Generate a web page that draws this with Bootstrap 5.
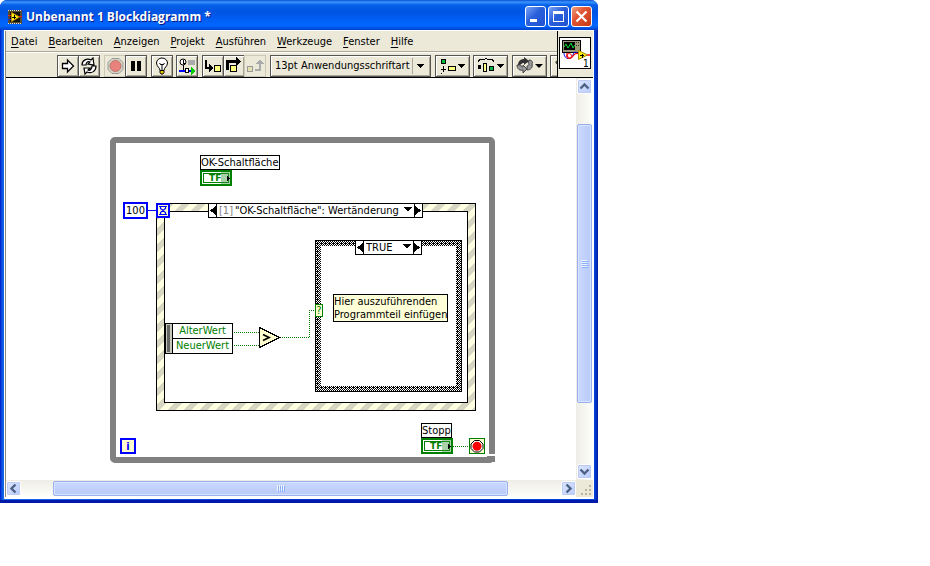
<!DOCTYPE html>
<html lang="de">
<head>
<meta charset="utf-8">
<meta name="viewport" content="width=device-width, initial-scale=1">
<title>Unbenannt 1 Blockdiagramm</title>
<link href="https://cdn.jsdelivr.net/npm/bootstrap@5.3.0/dist/css/bootstrap.min.css" rel="stylesheet">
<style>
:root { --face: #ece9d8; --ui: "DejaVu Sans Condensed", "DejaVu Sans", sans-serif; }
body { background: #fff; color: #000; font: 11px/13px var(--ui); }
svg { display: block; shape-rendering: crispEdges; }
.smooth { shape-rendering: auto; }
button, select, input { font: inherit; color: inherit; }
.vi-window { max-width: 598px; padding: 0 4px 4px; border-radius: 7px 7px 0 0; background: linear-gradient(90deg, #0019cf 0, #0855e0 2px, #166aee 4px, #0831d9 50%, #0046e0 calc(100% - 4px), #001ea0 100%); box-shadow: inset 0 -3px #0019a8; }
.title-strip { height: 30px; margin: 0 -4px; padding: 3px 6px 0 8px; border-radius: 7px 7px 0 0; background: linear-gradient(#0a4fd0 0, #3a94ff 2px, #0560e8 5px, #0054e3 12px, #0062fb 22px, #0066ff 26px, #0040c8 30px); }
.title-text { font: bold 12px/18px "Open Sans", "Noto Sans", sans-serif; color: #fff; text-shadow: 1px 1px #0a1883; }
.cap-group { gap: 2px; }
.cap-btn { width: 21px; height: 21px; padding: 0; border: 1px solid #fff; border-radius: 3px; background: linear-gradient(135deg, #7ba4f5, #2a5fdc 45%, #2052d0); }
.cap-close { background: linear-gradient(135deg, #f0a080, #e25433 40%, #c43a14); }
.face { background: var(--face); }
.client { border: solid #fff; border-width: 1px 1px 2px 1px; }
.client-inner { border-left: 1px solid #8c8a7c; }
.menu-strip { height: 21px; padding-left: 5px; gap: 11px; border-bottom: 1px solid #aca899; }
.menu-strip a { color: #000; text-decoration: none; white-space: nowrap; }
.menu-strip u { text-underline-offset: 2px; }
.tool-strip { height: 25px; padding: 2px 0 0 51px; border-top: 1px solid #fff; overflow: hidden; }
.tool { flex: none; width: 22px; height: 22px; padding: 0; border: 1px solid #555; background: var(--face); box-shadow: inset 1px 1px #fff, inset -1px -1px #aaa694; }
.tool + .tool { margin-left: -1px; }
.tool:disabled { border-color: #cbc8b8; box-shadow: none; }
.tool-wide { width: 35px; }
.tool svg, .cap-btn svg, .sb-btn svg { margin: auto; }
.font-pick { flex: none; width: 161px; height: 22px; border: 1px solid #555; background: var(--face); box-shadow: inset 1px 1px #fff, inset -1px -1px #aaa694; }
.font-pick select { appearance: none; width: 100%; height: 20px; padding: 0 0 2px 4px; border: 0; background: none; }
.font-pick svg { position: absolute; right: 0; top: 0; pointer-events: none; }
.icon-pane { width: 36px; border-left: 1px solid #000; padding: 6px 1px 0; }
.head { border-bottom: 1px solid #000; }
.plane { width: 569px; height: 402px; }
.plane > * { position: absolute; }
.tag { border: 1px solid #000; background: #fff; white-space: nowrap; line-height: 13px; }
.tf { width: 32px; height: 16px; border: 2px solid #008000; background: #fff; color: #008000; font: bold 9px/10px "DejaVu Sans", sans-serif; padding: 1px 0 0 7px; }
.tf::before { content: ""; position: absolute; left: 1px; top: 1px; right: 1px; bottom: 1px; border: 1px solid #008000; }
.tf::after { content: ""; position: absolute; right: 0; top: 0; bottom: 0; width: 9px; background: #3c963c70; }
.tf svg { position: absolute; right: -1px; top: 3px; z-index: 1; }
.blue-box { border: 2px solid #0000ff; text-align: center; }
.num-const { width: 25px; height: 17px; padding: 0; background: #fff; line-height: 13px; }
.iter { width: 16px; height: 16px; background: #ffffd0; color: #00f; font-weight: bold; line-height: 13px; }
.picker { border: 1px solid #000; background: #fff; height: 15px; }
.picker button { width: 8px; flex: none; border: 0; background: #fff; padding: 0 0 0 1px; }
.picker select { appearance: none; border: 0; background: none; padding: 0 0 0 2px; height: 13px; line-height: 13px; min-width: 0; }
.picker .drop { position: absolute; right: 10px; top: 3px; pointer-events: none; }
.picker button:first-child { border-right: 1px solid #000; }
.picker button:last-child { border-left: 1px solid #000; padding: 0; }
.dim { color: #808080; padding-left: 2px; }
.case-term { width: 8px; height: 13px; border: 1px solid #008000; background: #ffffd0; color: #008000; line-height: 11px; text-align: center; }
.data-node { width: 61px; color: #008000; text-align: center; border: 1px solid #000; background: #fff; }
.data-node div { line-height: 14px; }
.data-node div + div { border-top: 1px solid #000; }
.sb-v { width: 17px; background: linear-gradient(90deg, #eeede5, #fefefb); padding: 1px; }
.sb-h { height: 17px; background: linear-gradient(#eeede5, #fefefb); padding: 1px 0; }
.sb-btn { flex: none; width: 15px; height: 15px; padding: 0; border: 1px solid #fff; border-radius: 2px; background: linear-gradient(135deg, #dce6ff, #b9cbf9); box-shadow: inset 0 0 0 1px #bccbf5; }
.thumb-v, .thumb-h { border: 1px solid #98b0f0; border-radius: 2px; box-shadow: inset 0 0 0 1px #d8e3ff; }
.thumb-v { background: linear-gradient(90deg, #c9d8fd, #b9cafa); }
.thumb-h { background: linear-gradient(#c9d8fd, #b9cafa); }
.g30 { flex: 30 0 0; } .g280 { flex: 280 0 0; } .g61 { flex: 61 0 0; }
.g32 { flex: 32 0 0; } .g454 { flex: 448 0 0; } .g51 { flex: 52 0 0; }
.ok-label { left: 194px; top: 77px; min-width: 79px; line-height: 14px; height: 15px; }
.ok-term { left: 194px; top: 92px; }
.stop-label { left: 415px; top: 345px; min-width: 31px; line-height: 14px; height: 15px; }
.stop-term { left: 415px; top: 360px; }
.at-const { left: 117px; top: 124px; }
.at-iter { left: 114px; top: 360px; }
.event-pick { left: 202px; top: 125px; width: 215px; }
.case-pick { left: 349px; top: 162px; width: 67px; }
.note { left: 327px; top: 216px; background: #ffffd8; }
.at-case { left: 309px; top: 226px; }
.at-data { left: 166px; top: 245px; }
.grip { width: 17px; }
</style>
</head>
<body>
<main class="vi-window">
  <header class="title-strip d-flex align-items-center">
    <svg width="14" height="14" viewBox="0 0 14 14" class="flex-shrink-0" aria-hidden="true"><path fill="#544b32" d="M0 0h14v14H0z"/><path fill="#111" d="M2 2h10v10H2z"/><path stroke="#ddd" stroke-dasharray="1 1" d="M0 .5h14M0 13.500h14"/><path class="smooth" fill="#fe1" stroke="#b80" d="M3.500 2.500v9l8-4.500z"/><path stroke="#000" d="M4 7.500h4M6.500 5v4"/><path stroke="#e22" d="M0 5.500h3M11 6.500h3"/><path stroke="#22f" d="M0 9.500h3"/></svg>
    <span class="title-text flex-grow-1 ps-1 text-nowrap">Unbenannt 1 Blockdiagramm *</span>
    <div class="cap-group d-flex">
      <button class="cap-btn" aria-label="Minimieren"><svg width="19" height="19"><path fill="#fff" d="M4 12h7v3H4z"/></svg></button>
      <button class="cap-btn" aria-label="Maximieren"><svg width="19" height="19"><path fill="#fff" d="M4 4h11v11H4zM5 7v7h9V7z" fill-rule="evenodd"/></svg></button>
      <button class="cap-btn cap-close" aria-label="Schließen"><svg class="smooth" width="19" height="19"><path stroke="#fff" stroke-width="2.200" d="M4.500 4.500l10 10M14.500 4.500l-10 10"/></svg></button>
    </div>
  </header>
  <div class="client face"><div class="client-inner">
    <div class="head d-flex">
      <div class="flex-grow-1 overflow-hidden">
        <nav class="menu-strip d-flex align-items-center">
          <a href="#"><u>D</u>atei</a><a href="#"><u>B</u>earbeiten</a><a href="#"><u>A</u>nzeigen</a><a href="#"><u>P</u>rojekt</a><a href="#"><u>A</u>usführen</a><a href="#"><u>W</u>erkzeuge</a><a href="#"><u>F</u>enster</a><a href="#"><u>H</u>ilfe</a>
        </nav>
        <div class="tool-strip d-flex">
          <div class="d-flex me-1">
            <button class="tool" aria-label="Ausführen"><svg class="smooth" width="20" height="20"><path fill="#fff" stroke="#000" stroke-width="1.300" d="M4.500 7.500h5v-3.500l6 6-6 6v-3.500h-5z"/></svg></button>
            <button class="tool" aria-label="Wiederholt ausführen"><svg class="smooth" width="20" height="20"><path fill="#fff" stroke="#000" stroke-width="1.200" d="M3 9c0-5 5-7 9-5l2-2 1 7-6-1 2-2c-2-1-4 0-4 3zM17 10c0 5-4 8-9 6l-2 2-1-6 6 0-2 2c2 1 4-1 4-4z"/></svg></button>
          </div>
          <div class="d-flex me-1">
            <button class="tool" disabled aria-label="Abbrechen"><svg class="smooth" width="20" height="20"><path fill="#d6d2c2" stroke="#999" d="M7 2.500h7l4 4v7l-4 4H7l-4-4v-7z"/><circle cx="10.500" cy="10" r="5.500" fill="#e9827c" stroke="#b87972"/></svg></button>
            <button class="tool" aria-label="Pause"><svg width="20" height="20"><path d="M5 5h4v10H5zM11 5h4v10h-4z"/></svg></button>
          </div>
          <button class="tool me-1" aria-label="Highlight"><svg class="smooth" width="20" height="20"><path fill="#fff" stroke="#000" d="M8 14.500c0-3-3.500-4-3.500-7.500a5.500 5 0 0 1 11 0c0 3.500-3.500 4.500-3.500 7.500z"/><path fill="none" stroke="#000" d="M7.500 7l1.500 2 1-1 1 1 1.500-2M10 9v5"/><path fill="#e8c800" stroke="#000" d="M8 14.500h4v2l-1 1.500H9l-1-1.500z"/></svg></button>
          <button class="tool me-1" aria-label="Werte beibehalten"><svg width="20" height="20"><circle class="smooth" cx="6" cy="6" r="3" fill="#fff" stroke="#000"/><path fill="none" stroke="#000" d="M6.500 4v3h2M6.500 9v5"/><rect x="11" y="4" width="7" height="5" rx="1" fill="#aaa"/><path stroke="#00f" stroke-width="2" d="M2 15h6M12 15h2"/><path fill="#fff" stroke="#000" d="M8.500 12.500h3v4h-3z"/><path fill="#0c0" d="M14 11l5 4-5 4z"/></svg></button>
          <div class="d-flex me-1">
            <button class="tool" aria-label="Hineinspringen"><svg width="20" height="20"><path fill="none" stroke="#000" stroke-width="2" d="M3 4v8h4"/><path d="M6 8l4 4-4 4z"/><path fill="#ffff80" stroke="#000" d="M11.500 9.500h6v6h-6z"/></svg></button>
            <button class="tool" aria-label="Überspringen"><svg width="20" height="20"><path fill="none" stroke="#000" stroke-width="3" d="M3.500 14V5.500H13"/><path d="M12 1l5 4.500-5 4.500z"/><path fill="#ffff80" stroke="#000" d="M6.500 9.500h6v6h-6z"/></svg></button>
            <button class="tool" disabled aria-label="Hinausspringen"><svg width="20" height="20"><path fill="#e4e0b0" stroke="#999" d="M2.500 10.500h5v5h-5z"/><path fill="none" stroke="#aaa" stroke-width="2" d="M10 14h5V7"/><path fill="#aaa" d="M11 8l4-5 4 5z"/></svg></button>
          </div>
          <div class="font-pick position-relative me-1">
            <select aria-label="Schriftart"><option>13pt Anwendungsschriftart</option></select>
            <svg width="20" height="20"><path stroke="#aca899" d="M2.500 2v16"/><path d="M7 8h7l-3.500 4z"/></svg>
          </div>
          <button class="tool tool-wide me-1" aria-label="Objekte ausrichten"><svg width="32" height="20"><path fill="#0b3" stroke="#000" d="M4.500 3.500h4v4h-4z"/><path stroke="#000" d="M4 13.500h5M6.500 10v6M4 17.500h1"/><path fill="#ffff80" stroke="#000" d="M11.500 10.500h7v4h-7z"/><path d="M20 8h8l-4 4z"/></svg></button>
          <button class="tool tool-wide me-1" aria-label="Objekte anordnen"><svg width="32" height="20"><path fill="none" stroke="#000" d="M3 5.500l2-2h4l2-1 2 1h4l2 2"/><path d="M3 9h3v4H3z"/><path fill="#ff8" stroke="#000" d="M8.500 7.500h3v8h-3z"/><path fill="#0b3" stroke="#000" d="M14.500 10.500h4v4h-4z"/><path d="M21 8h8l-4 4z"/></svg></button>
          <button class="tool tool-wide ms-0 me-1" aria-label="Neu ordnen"><svg class="smooth" width="32" height="20"><path fill="#333" d="M4 9c0-4 3-6 6-6V1l5 4-5 4V7C7 7 8 9 4 9z"/><path fill="#999" stroke="#444" d="M3 9c0 4 3 6 6 5v3l4-4-4-4v2c-2 0-2-1-2-2zM18 8c1-2 0-4-3-4l-1 3c2 0 1 3-1 3v4c4 0 6-3 5-6z"/><path d="M21 8h8l-4 4z"/></svg></button>
          <button class="tool" aria-label="Kontexthilfe"><svg class="smooth" width="20" height="20"><path fill="#ff8" stroke="#000" d="M5 7c0-5 11-5 11 1 0 3-4 3-4 6H9c0-4 4-4 4-6 0-3-5-2-5 0zM9 16h3v3H9z"/></svg></button>
        </div>
      </div>
      <div class="icon-pane flex-shrink-0">
        <svg width="32" height="32" viewBox="0 0 32 32" role="img" aria-label="VI-Symbol"><path fill="#fff" stroke="#000" d="M.5.500h31v31H.5z"/><path fill="#9d9a78" stroke="#000" d="M3.500 3.500h18v12h-18z"/><path d="M5 5h11v8H5z"/><path class="smooth" fill="none" stroke="#0d3" d="M5 10l2-3 2 4 3-5 2 5 2-3"/><path fill="#333" d="M17 5h1v1h-1zM19 5h1v1h-1zM17 8h1v1h-1zM19 8h1v1h-1z"/><g class="smooth" fill="none"><path stroke="#00f" d="M5 16c0 7 8 7 9 2s4-2 6-1"/><path stroke="#f00" stroke-width="1.300" d="M8 16c0 7 4 6 6 3s4-3 6-2M27 18h4"/><circle cx="10" cy="19" r="2.500" stroke="#e22"/><path fill="#fe1" stroke="#a80" d="M19.500 13.500v9l9-4.500z"/></g><path stroke="#000" d="M21 18.500h4M23.500 17v4"/><text x="24" y="30" font-size="10">1</text></svg>
      </div>
    </div>
    <div class="d-flex">
      <div class="flex-grow-1 bg-white overflow-hidden">
        <section class="plane position-relative" aria-label="Blockdiagramm">
          <svg class="start-0 top-0" width="569" height="402" viewBox="6 78 569 402" aria-hidden="true">
            <defs>
              <pattern id="stripes" width="16" height="16" patternUnits="userSpaceOnUse" patternTransform="translate(9 0)"><path fill="#ffffe1" d="M0 0h16v16H0z"/><path fill="#d6d6c2" d="M8 0h8L0 16V8zM16 8v8H8z"/></pattern>
              <pattern id="weave" width="4" height="4" patternUnits="userSpaceOnUse"><path d="M0 0h4v4H0z"/><path fill="#fff" d="M0 0h1v1H0zM2 0h1v1H2zM1 1h1v1H1zM3 1h1v1H3zM0 2h1v1H0zM2 2h1v1H2zM3 3h1v1H3z"/></pattern>
            </defs>
            <rect class="smooth" x="113" y="140" width="379" height="320" rx="2" fill="none" stroke="#808080" stroke-width="6"/>
            <path fill="#fff" d="M489 454h7v2h-7zM491 463l2-2 2 2z"/><path fill="#808080" d="M487 456h8v6h-8z"/>
            <path fill="url(#stripes)" fill-rule="evenodd" d="M156 203h320v208H156zM164 211v192h304V211z"/>
            <path fill="none" stroke="#000" d="M156.500 203.500h319v207h-319zM164.500 211.500h303v191h-303z"/>
            <path fill="url(#weave)" fill-rule="evenodd" d="M315 240h147v152H315zM321 246v140h135V246z"/>
            <path fill="none" stroke="#000" d="M315.500 240.500h146v151h-146z"/>
            <path stroke="#00f" d="M148 210.500h9"/>
            <path fill="#ffffd0" stroke="#00f" stroke-width="2" d="M157 204h12v13h-12z"/>
            <path class="smooth" fill="none" stroke="#00f" stroke-width="1.200" d="M159 206.500h8M159 214.500h8M160.500 207v1.500l5 4v2M165.500 207v1.500l-5 4v2"/>
            <path fill="none" stroke="#008000" stroke-dasharray="1 1" d="M234 332.500h25M234 345.500h25M280 337.500h29M309.500 337V310M309 310.500h6M453 446.500h16"/>
            <path fill="#ffffd0" stroke="#000" d="M259.500 327.500v20l20-10z"/>
            <path class="smooth" fill="none" stroke="#000" stroke-width="1.800" d="M263 334.500l6 3-6 3"/>
            <path fill="#c8c8bc" stroke="#000" d="M165.500 323.500h7v30h-7z"/><path fill="#666" d="M167 325h3v27h-3z"/>
            <path fill="#ffffd0" stroke="#008000" d="M469.500 438.500h15v15h-15z"/><g class="smooth"><path fill="#fff" stroke="#000" d="M474.500 440.500h5l3.500 3.500v4.500l-3.500 3.500h-5l-3.500-3.500V444z"/><circle cx="477" cy="446.300" r="4.500" fill="#f00"/></g>
          </svg>
          <div class="tag ok-label">OK-Schaltfläche</div>
          <div class="tf ok-term">TF<svg width="5" height="7"><path d="M1 0v7l3-3.500z"/></svg></div>
          <input class="blue-box num-const at-const" value="100" aria-label="Timeout">
          <div class="picker event-pick d-flex">
            <button aria-label="Vorheriges Ereignis"><svg width="6" height="9"><path d="M6 0v9L0 4.500z"/></svg></button>
            <span class="dim">[1]</span>
            <select class="flex-grow-1" aria-label="Ereignis"><option>"OK-Schaltfläche": Wertänderung</option></select>
            <svg class="drop" width="8" height="5"><path d="M0 0h8L4 5z"/></svg>
            <button aria-label="Nächstes Ereignis"><svg width="6" height="9"><path d="M0 0v9l6-4.500z"/></svg></button>
          </div>
          <div class="picker case-pick d-flex">
            <button aria-label="Vorheriger Fall"><svg width="6" height="9"><path d="M6 0v9L0 4.500z"/></svg></button>
            <select class="flex-grow-1" aria-label="Fall"><option>TRUE</option></select>
            <svg class="drop" width="8" height="5"><path d="M0 0h8L4 5z"/></svg>
            <button aria-label="Nächster Fall"><svg width="6" height="9"><path d="M0 0v9l6-4.500z"/></svg></button>
          </div>
          <div class="tag note">Hier auszuführenden<br>Programmteil einfügen</div>
          <div class="case-term at-case">?</div>
          <div class="data-node at-data"><div>AlterWert</div><div>NeuerWert</div></div>
          <div class="blue-box iter at-iter">i</div>
          <div class="tag stop-label">Stopp</div>
          <div class="tf stop-term">TF<svg width="5" height="7"><path d="M1 0v7l3-3.500z"/></svg></div>
        </section>
      </div>
      <div class="sb-v d-flex flex-column flex-shrink-0">
        <button class="sb-btn" aria-label="Nach oben"><svg class="smooth" width="13" height="13"><path fill="none" stroke="#4d6185" stroke-width="2.400" d="M2.500 8.500l4-4 4 4"/></svg></button>
        <div class="g30"></div>
        <div class="thumb-v g280 d-flex align-items-center justify-content-center"><svg width="7" height="8"><path stroke="#eef4ff" d="M0 .5h6M0 2.500h6M0 4.500h6M0 6.500h6"/><path stroke="#8cb0f8" d="M1 1.500h6M1 3.500h6M1 5.500h6M1 7.500h6"/></svg></div>
        <div class="g61"></div>
        <button class="sb-btn" aria-label="Nach unten"><svg class="smooth" width="13" height="13"><path fill="none" stroke="#4d6185" stroke-width="2.400" d="M2.500 4.500l4 4 4-4"/></svg></button>
      </div>
    </div>
    <div class="d-flex">
      <div class="sb-h d-flex flex-grow-1">
        <button class="sb-btn" aria-label="Nach links"><svg class="smooth" width="13" height="13"><path fill="none" stroke="#4d6185" stroke-width="2.400" d="M8.500 2.500l-4 4 4 4"/></svg></button>
        <div class="g32"></div>
        <div class="thumb-h g454 d-flex align-items-center justify-content-center"><svg width="8" height="7"><path stroke="#eef4ff" d="M.5 0v6M2.500 0v6M4.500 0v6M6.500 0v6"/><path stroke="#8cb0f8" d="M1.500 1v6M3.500 1v6M5.500 1v6M7.500 1v6"/></svg></div>
        <div class="g51"></div>
        <button class="sb-btn" aria-label="Nach rechts"><svg class="smooth" width="13" height="13"><path fill="none" stroke="#4d6185" stroke-width="2.400" d="M4.500 2.500l4 4-4 4"/></svg></button>
      </div>
      <div class="grip flex-shrink-0"><svg width="17" height="17"><path fill="#b8b4a2" d="M13 5h2v2h-2zM9 9h2v2H9zM13 9h2v2h-2zM5 13h2v2H5zM9 13h2v2H9zM13 13h2v2h-2z"/></svg></div>
    </div>
  </div></div>
</main>
<script src="https://cdn.jsdelivr.net/npm/bootstrap@5.3.0/dist/js/bootstrap.bundle.min.js"></script>
</body>
</html>
